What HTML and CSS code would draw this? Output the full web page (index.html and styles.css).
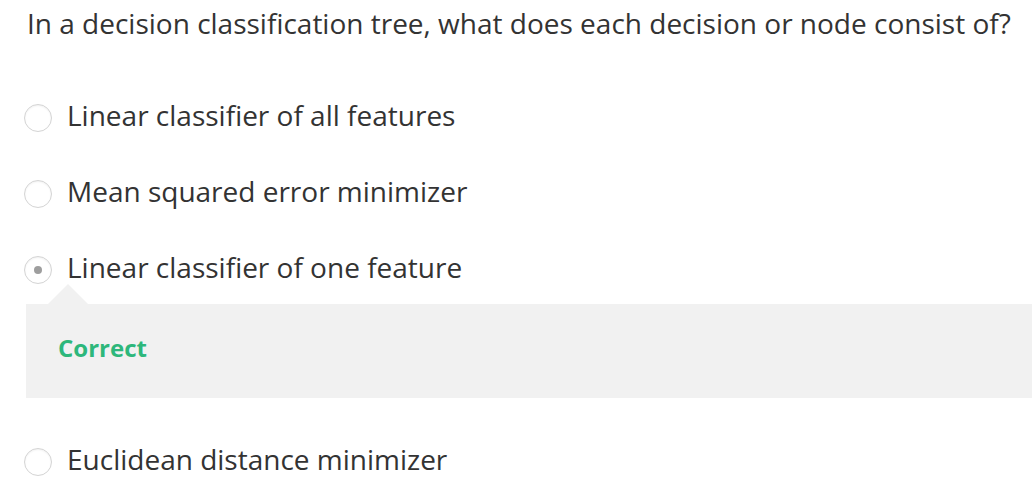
FILE: index.html
```html
<!DOCTYPE html>
<html>
  <head>
    <meta charset="utf-8">
    <link rel="stylesheet" href="styles.css">
  </head>
  <body>
    <div class="question">
      <div class="prompt">In a decision classification tree, what does each decision or node consist of?</div>

      <div class="options">
        <label class="option">
          <input type="radio" name="q1" class="radio">
          <span class="option-text">Linear classifier of all features</span>
        </label>
        <label class="option">
          <input type="radio" name="q1" class="radio">
          <span class="option-text">Mean squared error minimizer</span>
        </label>
        <label class="option">
          <input type="radio" name="q1" class="radio" checked>
          <span class="option-text">Linear classifier of one feature</span>
        </label>
        <div class="feedback">
          <div class="feedback-title">Correct</div>
        </div>
        <label class="option">
          <input type="radio" name="q1" class="radio">
          <span class="option-text">Euclidean distance minimizer</span>
        </label>
      </div>
    </div>
  </body>
</html>
```

FILE: styles.css
```css
body {
  font-family: 'Open Sans', sans-serif;
  margin: 0;
  padding: 0;
  background-color: white;
  color: #333333;
}
.question {
  padding: 3px 0 0 0;
}
.prompt {
  font-size: 28px;
  line-height: 40px;
  padding: 0 0 0 27px;
  white-space: nowrap;
}
.options {
  padding-top: 52px;
}
.option {
  display: flex;
  align-items: flex-start;
  gap: 15px;
  padding-left: 24px;
  height: 40px;
  margin-bottom: 36px;
  cursor: pointer;
}
.option-text {
  font-size: 28px;
  line-height: 40px;
}
.radio {
  appearance: none;
  -webkit-appearance: none;
  margin: 9px 0 0 0;
  width: 28px;
  height: 28px;
  flex-shrink: 0;
  border: 1px solid #d4d4d4;
  border-radius: 50%;
  background-color: white;
  box-shadow: inset 0 1px 2px rgba(0, 0, 0, 0.06);
  display: flex;
  align-items: center;
  justify-content: center;
}
.radio:checked::after {
  content: '';
  width: 8px;
  height: 8px;
  border-radius: 50%;
  background-color: #9e9e9e;
}
.option:nth-child(3) {
  margin-bottom: 17px;
}
.feedback {
  position: relative;
  margin-left: 26px;
  background-color: #f1f1f1;
  padding: 29px 32px 35px;
  margin-bottom: 41px;
}
.feedback::before {
  content: '';
  position: absolute;
  top: -20px;
  left: 22px;
  border-left: 20px solid transparent;
  border-right: 20px solid transparent;
  border-bottom: 20px solid #f1f1f1;
}
.feedback-title {
  font-size: 24px;
  line-height: 30px;
  font-weight: 700;
  color: #2db77b;
}
```
